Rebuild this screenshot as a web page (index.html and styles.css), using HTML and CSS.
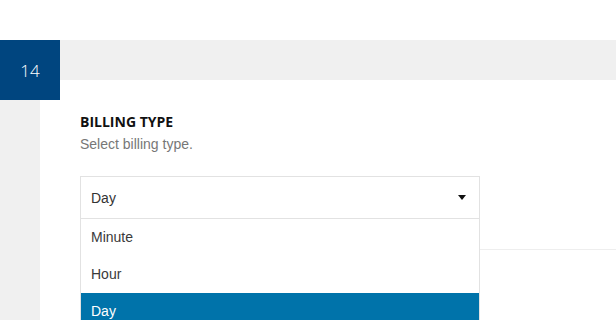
FILE: index.html
```html
<!DOCTYPE html>
<html>
<head>
<meta charset="utf-8">
<link rel="stylesheet" href="styles.css">
</head>
<body>
<div class="page">
  <div class="topspace"></div>
  <div class="band"></div>
  <div class="badge">14</div>
  <div class="layout">
    <div class="side"></div>
    <div class="content">
      <div class="field">
        <h3 class="title">BILLING TYPE</h3>
        <p class="desc">Select billing type.</p>
        <div class="select-wrap">
          <div class="select">
            <span class="value">Day</span>
            <span class="caret"></span>
          </div>
          <ul class="options">
            <li class="option">Minute</li>
            <li class="option">Hour</li>
            <li class="option selected">Day</li>
          </ul>
        </div>
      </div>
      <div class="divider"></div>
    </div>
  </div>
</div>
</body>
</html>
```
FILE: styles.css
```css
html, body {
  margin: 0;
  padding: 0;
  background: #fff;
  font-family: "Liberation Sans", Arial, sans-serif;
}
.page {
  position: relative;
  width: 616px;
  height: 320px;
  overflow: hidden;
}
.topspace {
  height: 40px;
}
.band {
  height: 40px;
  background: #f0f0f0;
}
.badge {
  position: absolute;
  left: 0;
  top: 40px;
  width: 60px;
  height: 60px;
  background: #00457f;
  color: #fff;
  font-family: "Open Sans", sans-serif;
  font-weight: 300;
  font-size: 17px;
  display: flex;
  align-items: center;
  justify-content: center;
}
.layout {
  display: flex;
  height: 240px;
}
.side {
  width: 40px;
  background: #f0f0f0;
}
.content {
  flex: 1;
  position: relative;
  padding: 32px 0 0 40px;
}
.title {
  margin: 0;
  font-family: "Open Sans", sans-serif;
  font-weight: 700;
  font-size: 14px;
  line-height: 20px;
  color: #111;
}
.desc {
  margin: 3px 0 0;
  font-size: 14px;
  line-height: 18px;
  color: #777;
}
.select-wrap {
  position: relative;
  width: 400px;
  margin-top: 23px;
  z-index: 2;
}
.select {
  height: 41px;
  border: 1px solid #e2e2e2;
  border-bottom: none;
  display: flex;
  align-items: center;
  justify-content: space-between;
  padding: 0 13px 0 10px;
  font-size: 14px;
  color: #333;
}
.caret {
  width: 0;
  height: 0;
  border-left: 4px solid transparent;
  border-right: 4px solid transparent;
  border-top: 5px solid #111;
}
.options {
  list-style: none;
  margin: 0;
  padding: 0;
  border: 1px solid #e2e2e2;
  background: #fff;
}
.option {
  height: 37px;
  line-height: 37px;
  padding: 0 10px;
  font-size: 14px;
  color: #3a3a3a;
}
.option.selected {
  background: #0073aa;
  color: #fff;
}
.divider {
  position: absolute;
  left: 40px;
  right: 0;
  top: 169px;
  height: 1px;
  background: #eeeeee;
  z-index: 1;
}
```
